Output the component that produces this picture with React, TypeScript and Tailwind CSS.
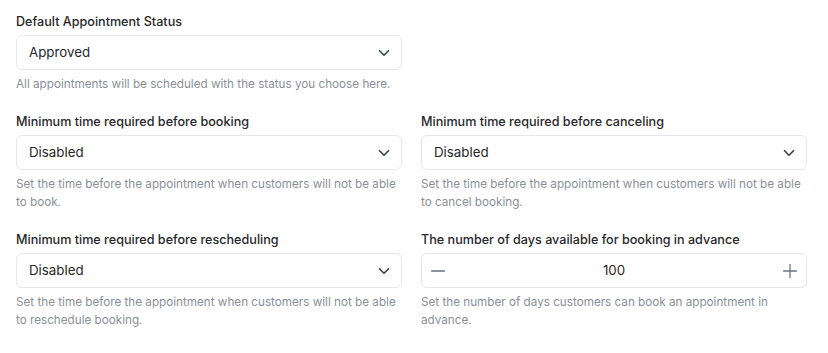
import { ChevronDown, Minus, Plus } from "lucide-react";

interface FieldProps {
  label: string;
  help: string;
  children: React.ReactNode;
}

function Field({ label, help, children }: FieldProps) {
  return (
    <div className="flex flex-col">
      <label className="text-[12.6px] leading-5 font-medium text-[#27272a]">
        {label}
      </label>
      <div className="mt-[3px]">{children}</div>
      <p className="mt-[5px] text-[11.7px] leading-[18px] text-[#8a8f98]">
        {help}
      </p>
    </div>
  );
}

function SelectBox({ value }: { value: string }) {
  return (
    <div className="flex h-[35px] items-center justify-between rounded-md border border-[#e5e7eb] bg-white pl-[12px] pr-[8px]">
      <span className="text-[13.3px] text-[#27272a]">{value}</span>
      <ChevronDown className="h-[18px] w-[18px] text-[#374151]" strokeWidth={2.2} />
    </div>
  );
}

function Stepper({ value }: { value: number }) {
  return (
    <div className="flex h-[35px] items-center justify-between rounded-md border border-[#e5e7eb] bg-white px-[5px]">
      <Minus className="h-[22px] w-[22px] text-[#6b7280]" strokeWidth={1.4} />
      <span className="text-[13.3px] text-[#27272a]">{value}</span>
      <Plus className="h-[22px] w-[22px] text-[#6b7280]" strokeWidth={1.4} />
    </div>
  );
}

export default function App() {
  return (
    <div
      className="min-h-[353px] bg-white pl-4 pt-3"
      style={{ fontFamily: "Inter, 'Noto Sans', sans-serif" }}
    >
      <div className="w-[791px]">
        <div className="w-[386px]">
          <Field
            label="Default Appointment Status"
            help="All appointments will be scheduled with the status you choose here."
          >
            <SelectBox value="Approved" />
          </Field>
        </div>

        <div className="mt-[19px] grid grid-cols-2 gap-x-[19px] gap-y-[19px]">
          <Field
            label="Minimum time required before booking"
            help="Set the time before the appointment when customers will not be able to book."
          >
            <SelectBox value="Disabled" />
          </Field>
          <Field
            label="Minimum time required before canceling"
            help="Set the time before the appointment when customers will not be able to cancel booking."
          >
            <SelectBox value="Disabled" />
          </Field>
          <Field
            label="Minimum time required before rescheduling"
            help="Set the time before the appointment when customers will not be able to reschedule booking."
          >
            <SelectBox value="Disabled" />
          </Field>
          <Field
            label="The number of days available for booking in advance"
            help="Set the number of days customers can book an appointment in advance."
          >
            <Stepper value={100} />
          </Field>
        </div>
      </div>
    </div>
  );
}
